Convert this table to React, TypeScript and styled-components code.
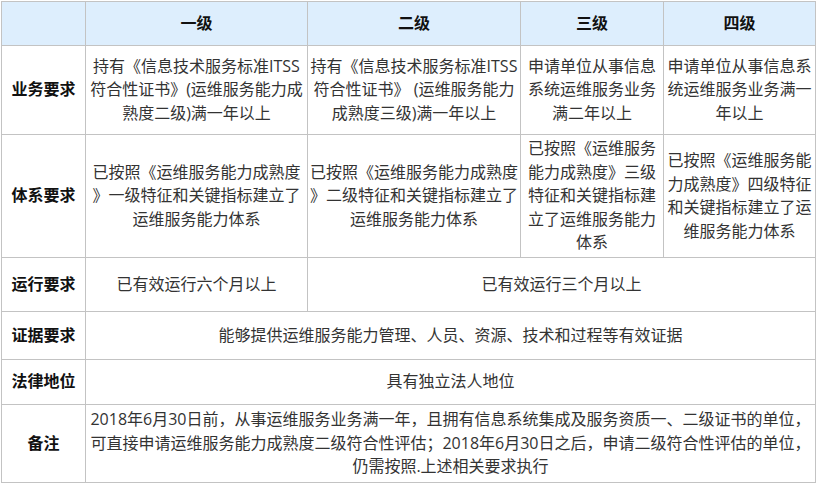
import React from "react";
import styled, { createGlobalStyle } from "styled-components";

const Global = createGlobalStyle`
  html, body { margin: 0; padding: 0; background: #ffffff; }
  body {
    font-family: "Open Sans", "Noto Sans CJK SC", sans-serif;
  }
`;

const Page = styled.div`
  padding: 1px 0 0 1px;
`;

const Grid = styled.div`
  display: grid;
  width: 815px;
  box-sizing: border-box;
  grid-template-columns: 83px 221px 212px 142px 151px;
  grid-template-rows: 43px 88px 122px 53px 47px 44px 77px;
  gap: 1px;
  padding: 1px;
  background: #c3c3c3;
`;

const Cell = styled.div<{ $span?: number; $head?: boolean; $label?: boolean }>`
  grid-column: span ${(p) => p.$span ?? 1};
  display: flex;
  align-items: center;
  justify-content: center;
  text-align: center;
  background: ${(p) => (p.$head ? "#ddeefd" : "#ffffff")};
  color: ${(p) => (p.$head || p.$label ? "#111111" : "#333333")};
  font-weight: ${(p) => (p.$head || p.$label ? 700 : 400)};
  font-size: 16px;
  line-height: 23.5px;
  padding: 0 2px;
  white-space: nowrap;
  box-sizing: border-box;
`;

const rows: { label: string; cells: { span?: number; lines: string[] }[] }[] = [
  {
    label: "业务要求",
    cells: [
      { lines: ["持有《信息技术服务标准ITSS", "符合性证书》(运维服务能力成", "熟度二级)满一年以上"] },
      { lines: ["持有《信息技术服务标准ITSS", "符合性证书》 (运维服务能力", "成熟度三级)满一年以上"] },
      { lines: ["申请单位从事信息", "系统运维服务业务", "满二年以上"] },
      { lines: ["申请单位从事信息系", "统运维服务业务满一", "年以上"] },
    ],
  },
  {
    label: "体系要求",
    cells: [
      { lines: ["已按照《运维服务能力成熟度", "》一级特征和关键指标建立了", "运维服务能力体系"] },
      { lines: ["已按照《运维服务能力成熟度", "》二级特征和关键指标建立了", "运维服务能力体系"] },
      { lines: ["已按照《运维服务", "能力成熟度》三级", "特征和关键指标建", "立了运维服务能力", "体系"] },
      { lines: ["已按照《运维服务能", "力成熟度》四级特征", "和关键指标建立了运", "维服务能力体系"] },
    ],
  },
  {
    label: "运行要求",
    cells: [
      { lines: ["已有效运行六个月以上"] },
      { span: 3, lines: ["已有效运行三个月以上"] },
    ],
  },
  {
    label: "证据要求",
    cells: [{ span: 4, lines: ["能够提供运维服务能力管理、人员、资源、技术和过程等有效证据"] }],
  },
  {
    label: "法律地位",
    cells: [{ span: 4, lines: ["具有独立法人地位"] }],
  },
  {
    label: "备注",
    cells: [
      {
        span: 4,
        lines: [
          "2018年6月30日前，从事运维服务业务满一年，且拥有信息系统集成及服务资质一、二级证书的单位，",
          "可直接申请运维服务能力成熟度二级符合性评估；2018年6月30日之后，申请二级符合性评估的单位，",
          "仍需按照.上述相关要求执行",
        ],
      },
    ],
  },
];

const Lines: React.FC<{ lines: string[] }> = ({ lines }) => (
  <div>
    {lines.map((l, i) => (
      <React.Fragment key={i}>
        {i > 0 && <br />}
        {l}
      </React.Fragment>
    ))}
  </div>
);

export default function App() {
  return (
    <Page>
      <Global />
      <Grid>
        <Cell $head />
        <Cell $head>一级</Cell>
        <Cell $head>二级</Cell>
        <Cell $head>三级</Cell>
        <Cell $head>四级</Cell>
        {rows.map((r) => (
          <React.Fragment key={r.label}>
            <Cell $label>{r.label}</Cell>
            {r.cells.map((c, i) => (
              <Cell key={i} $span={c.span}>
                <Lines lines={c.lines} />
              </Cell>
            ))}
          </React.Fragment>
        ))}
      </Grid>
    </Page>
  );
}
